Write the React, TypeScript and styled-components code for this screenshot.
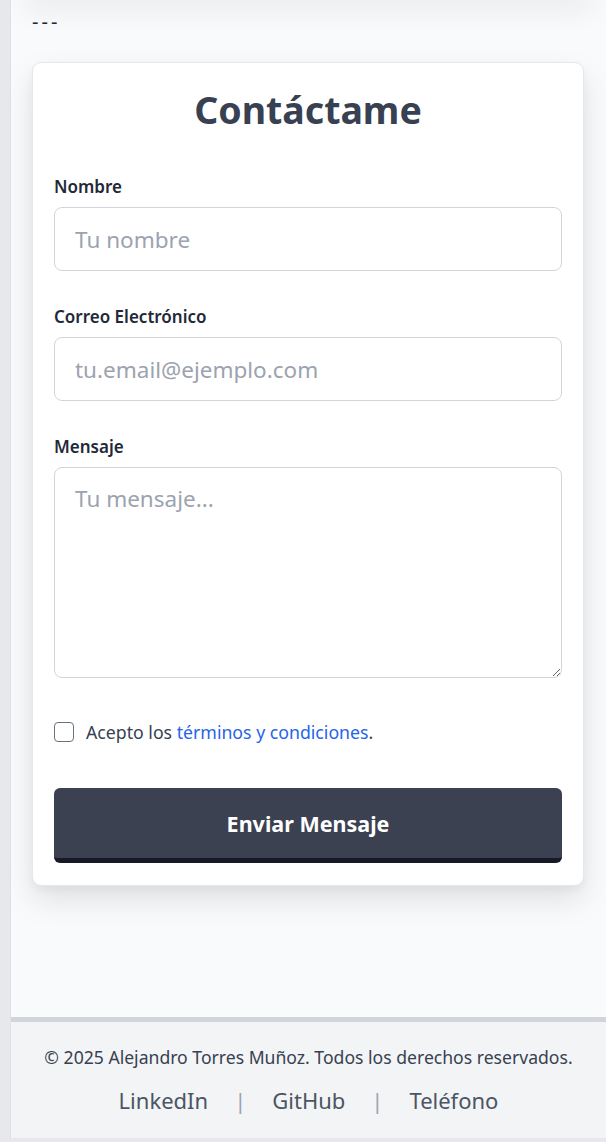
import React from "react";
import styled, { createGlobalStyle } from "styled-components";

const Global = createGlobalStyle`
  html, body { margin: 0; padding: 0; }
  body {
    background: #e6e8ec;
    font-family: "Noto Sans", "Open Sans", sans-serif;
    color: #1f2937;
  }
  * { box-sizing: border-box; }
`;

const Page = styled.div`
  margin-left: 10px;
  border-left: 1px solid #dde0e5;
  border-bottom: 2px solid #e6e8ec;
  background: #f9fafb;
  height: 1140px;
  display: flex;
  flex-direction: column;
  overflow: hidden;
`;

const TopShadow = styled.div`
  height: 0;
  margin: 0 22px;
  box-shadow: 0 0 28px 10px rgba(0, 0, 0, 0.07);
`;

const Main = styled.main`
  flex: 1;
  padding: 6px 22px 0 21px;
  display: flex;
  flex-direction: column;
`;

const Divider = styled.p`
  margin: 0 0 24px 0;
  font-size: 20px;
  line-height: 32px;
  color: #1f2937;
  letter-spacing: 3px;
`;

const Card = styled.form`
  background: #ffffff;
  border: 1px solid #e5e7eb;
  border-radius: 9px;
  box-shadow: 0 14px 30px rgba(0, 0, 0, 0.1), 0 4px 8px rgba(0, 0, 0, 0.04);
  padding: 21px 21px 22px 21px;
  display: flex;
  flex-direction: column;
`;

const Title = styled.h2`
  margin: 0 0 39px 0;
  text-align: center;
  font-size: 37.5px;
  line-height: 52px;
  font-weight: 700;
  color: #374151;
`;

const Field = styled.div`
  display: flex;
  flex-direction: column;
  margin-bottom: 34px;
`;

const Label = styled.label`
  font-size: 17px;
  line-height: 24px;
  font-weight: 600;
  color: #1f2937;
  margin-bottom: 8px;
`;

const TextInput = styled.input`
  height: 64px;
  border: 1.5px solid #d1d5db;
  border-radius: 8px;
  padding: 0 20px;
  font-family: inherit;
  font-size: 22.5px;
  color: #1f2937;
  background: #fff;
  outline: none;
  &::placeholder { color: #9ca3af; }
`;

const TextArea = styled.textarea`
  height: 211px;
  border: 1.5px solid #d1d5db;
  border-radius: 8px;
  padding: 15px 20px;
  font-family: inherit;
  font-size: 22.5px;
  line-height: 32px;
  color: #1f2937;
  background: #fff;
  outline: none;
  &::placeholder { color: #9ca3af; }
`;

const CheckRow = styled.label`
  display: flex;
  align-items: center;
  gap: 12px;
  margin-top: 8px;
  margin-bottom: 44px;
  font-size: 17.7px;
  line-height: 24px;
  color: #374151;
`;

const Box = styled.span`
  width: 20px;
  height: 20px;
  border: 1.5px solid #6b7280;
  border-radius: 4px;
  background: #fff;
  flex-shrink: 0;
`;

const Link = styled.a`
  color: #2563eb;
  text-decoration: none;
`;

const Button = styled.button`
  height: 75px;
  border: none;
  border-bottom: 5px solid #151a26;
  border-radius: 6px;
  background: #3b4151;
  color: #ffffff;
  font-family: inherit;
  font-size: 21.5px;
  font-weight: 700;
  cursor: pointer;
`;

const Footer = styled.footer`
  height: 121px;
  border-top: 5px solid #d1d5db;
  background: #f3f4f6;
  display: flex;
  flex-direction: column;
  align-items: center;
  padding-top: 23px;
`;

const Copy = styled.p`
  margin: 0 0 16px 0;
  font-size: 17.6px;
  line-height: 24px;
  color: #374151;
`;

const Links = styled.nav`
  display: flex;
  align-items: center;
  gap: 26px;
  font-size: 22px;
  line-height: 30px;
  color: #4b5563;
`;

const Sep = styled.span`
  color: #9ca3af;
`;

export default function App() {
  return (
    <>
      <Global />
      <Page>
        <TopShadow />
        <Main>
          <Divider>---</Divider>
          <Card onSubmit={(e) => e.preventDefault()}>
            <Title>Contáctame</Title>
            <Field>
              <Label>Nombre</Label>
              <TextInput placeholder="Tu nombre" />
            </Field>
            <Field>
              <Label>Correo Electrónico</Label>
              <TextInput placeholder="tu.email@ejemplo.com" />
            </Field>
            <Field>
              <Label>Mensaje</Label>
              <TextArea placeholder="Tu mensaje..." />
            </Field>
            <CheckRow>
              <Box />
              <span>
                Acepto los <Link href="#">términos y condiciones</Link>.
              </span>
            </CheckRow>
            <Button type="submit">Enviar Mensaje</Button>
          </Card>
        </Main>
        <Footer>
          <Copy>© 2025 Alejandro Torres Muñoz. Todos los derechos reservados.</Copy>
          <Links>
            <span>LinkedIn</span>
            <Sep>|</Sep>
            <span>GitHub</span>
            <Sep>|</Sep>
            <span>Teléfono</span>
          </Links>
        </Footer>
      </Page>
    </>
  );
}
